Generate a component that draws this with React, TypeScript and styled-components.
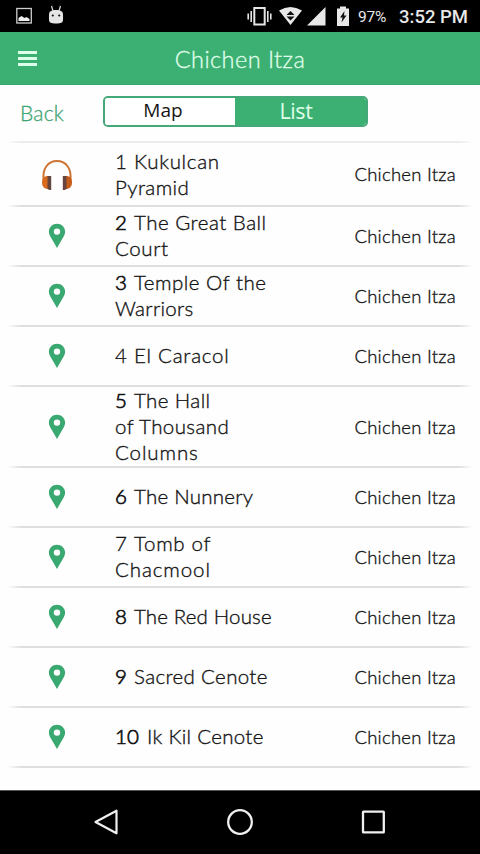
import React from 'react';
import styled, { createGlobalStyle } from 'styled-components';

const GREEN = '#3cb072';

const Global = createGlobalStyle`
  * { box-sizing: border-box; }
  html, body { margin: 0; padding: 0; background: #000; }
  body { overflow: hidden; }
`;

const Screen = styled.div`
  width: 480px;
  height: 854px;
  display: flex;
  flex-direction: column;
  background: #fefefe;
  font-family: Lato, "Liberation Sans", sans-serif;
  color: #141414;
`;

const StatusBar = styled.div`
  height: 32px;
  background: #000;
  display: flex;
  align-items: center;
  justify-content: space-between;
  padding: 0 11px 0 15px;
  font-family: Roboto, sans-serif;
  color: #e8e8e8;
`;

const StatusGroup = styled.div`
  display: flex;
  align-items: center;
  height: 32px;
`;

const Battery = styled.span`
  font-size: 15.5px;
  width: 29px;
  margin: 2px 12px 0 7px;
  letter-spacing: -0.2px;
`;

const Clock = styled.span`
  font-size: 18.5px;
  font-weight: 500;
  width: 70px;
  white-space: nowrap;
  margin-top: 2px;
`;

const Header = styled.header`
  height: 53px;
  background: ${GREEN};
  display: grid;
  grid-template-columns: 56px 1fr 56px;
  align-items: center;
  border-bottom: 1px solid #38a469;
`;

const Title = styled.h1`
  margin: 2px 0 0;
  text-align: center;
  font-size: 23.5px;
  line-height: 30px;
  font-weight: 300;
  letter-spacing: 0.45px;
  -webkit-text-stroke: 0.3px;
  color: #e0ffec;
`;

const MenuButton = styled.div`
  display: flex;
  flex-direction: column;
  gap: 3px;
  padding-left: 18px;
`;

const MenuLine = styled.span`
  width: 19px;
  height: 3px;
  background: #dcffe9;
`;

const Toolbar = styled.div`
  height: 56px;
  display: flex;
  align-items: flex-start;
  padding: 11px 0 0 20px;
`;

const Back = styled.span`
  width: 83px;
  padding-top: 4px;
  font-size: 21px;
  line-height: 26px;
  font-weight: 300;
  letter-spacing: 0.2px;
  -webkit-text-stroke: 0.3px;
  color: #3fa474;
`;

const Segmented = styled.div`
  width: 265px;
  height: 31px;
  display: flex;
  border: 2px solid #45a878;
  border-radius: 5px;
  overflow: hidden;
`;

const Segment = styled.div<{ $active?: boolean }>`
  width: ${p => (p.$active ? 131 : 130)}px;
  padding-right: ${p => (p.$active ? 9 : 14)}px;
  height: 27px;
  text-align: center;
  font-family: "Open Sans", sans-serif;
  font-size: ${p => (p.$active ? 21.5 : 19)}px;
  letter-spacing: ${p => (p.$active ? -0.4 : 0)}px;
  line-height: 25px;
  background: ${p => (p.$active ? GREEN : '#fff')};
  color: ${p => (p.$active ? '#ddffe9' : '#161616')};
`;

const fade = (tone: string) =>
  `linear-gradient(90deg, transparent, ${tone} 14px, ${tone} calc(100% - 14px), transparent)`;

const List = styled.div`
  flex: 1;
  margin: 0 7px;
  background: ${fade('#ececec')} top / 100% 2px no-repeat;
`;

const Row = styled.div<{ $height: number }>`
  height: ${p => p.$height}px;
  display: grid;
  grid-template-columns: 108px 1fr 110px;
  align-items: center;
  padding-bottom: 2px;
  background: ${fade('#dfdfdf')} bottom / 100% 2px no-repeat;

  &:first-child {
    padding: 1px 0 0;
  }
`;

const IconCell = styled.div`
  display: flex;
  justify-content: center;
  padding-right: 8px;
`;

const Name = styled.div`
  display: flex;
  flex-direction: column;
  padding-bottom: 2px;
`;

const Line = styled.span<{ $spacing: number }>`
  font-size: 20.5px;
  line-height: 26px;
  font-weight: 300;
  white-space: nowrap;
  letter-spacing: ${p => p.$spacing}px;
  -webkit-text-stroke: 0.35px;
`;

const Num = styled.span<{ $wide: boolean; $thin: boolean }>`
  display: inline-block;
  width: ${p => (p.$wide ? 32 : 19)}px;
  -webkit-text-stroke: ${p => (p.$thin ? 0.3 : 0.7)}px;
  letter-spacing: 0;
`;

const Place = styled.div`
  margin-left: -19px;
  padding: 0 17px 1px 0;
  text-align: right;
  font-size: 18.5px;
  line-height: 24px;
  font-weight: 300;
  white-space: nowrap;
  letter-spacing: 0.25px;
  -webkit-text-stroke: 0.35px;
`;

const NavBar = styled.nav`
  height: 64px;
  background: #000;
  border-top: 1px solid #555;
  display: flex;
  justify-content: space-between;
  align-items: center;
  padding: 0 93px 2px;
`;

const Pin = () => (
  <svg width="18" height="26" viewBox="0 0 18 26">
    <path fillRule="evenodd" fill="#3aa871" d="M9 .8C4.500.8.900 4.200.900 8.700c0 2 .8 3.800 1.900 5.500L9 25l6.200-10.800c1.100-1.700 1.900-3.500 1.900-5.500C17.100 4.200 13.500.8 9 .8zM9 5.400a3.200 3.200 0 1 1 0 6.400 3.200 3.200 0 0 1 0-6.400z" />
  </svg>
);

const Headphones = () => (
  <svg width="32" height="32" viewBox="0 0 32 32">
    <path d="M2.600 21C1.200 9.500 7 2.100 16 2.100S30.800 9.500 29.400 21" fill="none" stroke="#cc7636" strokeWidth="2" />
    <path d="M7 17C3 17 1 19 1 23.500S4 30 7 30z" fill="#d9691d" />
    <path d="M25 17c4 0 6 2 6 6.500S28 30 25 30z" fill="#c65c1a" />
    <path d="M6.500 17h3.700v14H8.500l-2-1z M25.500 17h-3.700v14h1.700l2-1z" fill="#65453d" />
  </svg>
);

const LeftStatus = () => (
  <svg width="52" height="24" viewBox="0 0 52 24">
    <rect x="1.800" y="4.500" width="14.500" height="14.500" fill="none" stroke="#ccc" strokeWidth="1.300" />
    <path d="M3.500 17v-3l3-2 3 2 2-1 3 2v2z" fill="#eee" />
    <path d="M34 10.500c0-3 2-4.500 7-4.500s7 1.500 7 4.500V16c0 2.500-2 3.500-7 3.500S34 18.500 34 16z" fill="#e5e5e5" />
    <path d="M38 7l-1.500-5M44 7l1.500-5" stroke="#ddd" strokeWidth="1.200" />
    <circle cx="37.800" cy="11.500" r="1.100" fill="#111" />
    <circle cx="44.200" cy="11.500" r="1.100" fill="#111" />
  </svg>
);

const RightStatus = () => (
  <svg width="104" height="24" viewBox="0 0 104 24">
    <g fill="none" stroke="#e5e5e5">
      <rect x="7.300" y="4" width="10.400" height="16.500" strokeWidth="2" />
      <path d="M4.200 7v11M20.800 7v11M1.200 9.500v6M23.800 9.500v6" strokeWidth="1.600" />
    </g>
    <path d="M32 6.500Q43.500-.5 55 6.500L43.500 21z" fill="#e8e8e8" />
    <path d="M43.500 7l4 4h-8zM39.500 12.500h8l-4 4z" fill="#111" />
    <path d="M60 21.500h18.500V3z" fill="#e8e8e8" />
    <path d="M90 4.500h3v-2h6v2h3v17.500H90z" fill="#e8e8e8" />
    <path d="M97.500 7l-4.500 6.500h2.500L94.500 18.500l5-7H97z" fill="#111" />
  </svg>
);

const NavBack = () => (
  <svg width="28" height="30" viewBox="0 0 28 30">
    <path d="M2.500 15L23.500 3.700v22.600z" fill="none" stroke="#f0f0f0" strokeWidth="2.200" strokeLinejoin="round" />
  </svg>
);
const NavHome = () => (
  <svg width="28" height="30" viewBox="0 0 28 30">
    <circle cx="14" cy="15" r="11.800" fill="none" stroke="#f0f0f0" strokeWidth="2.300" />
  </svg>
);
const NavRecent = () => (
  <svg width="28" height="30" viewBox="0 0 28 30">
    <rect x="4" y="4.600" width="20.800" height="20.800" rx=".5" fill="none" stroke="#f0f0f0" strokeWidth="2.300" />
  </svg>
);

type Site = { n: number; height: number; lines: [string, number][]; audio?: boolean };

const THIN_DIGITS = [1, 4, 7];

const sites: Site[] = [
  { n: 1, height: 66, audio: true, lines: [['Kukulcan', 0.7], ['Pyramid', 0.4]] },
  { n: 2, height: 60, lines: [['The Great Ball', 0.5], ['Court', 0.6]] },
  { n: 3, height: 60, lines: [['Temple Of the', 0.5], ['Warriors', 0.3]] },
  { n: 4, height: 60, lines: [['El Caracol', 0.75]] },
  { n: 5, height: 81, lines: [['The Hall', 0.4], ['of Thousand', 0.4], ['Columns', 0.9]] },
  { n: 6, height: 60, lines: [['The Nunnery', 0.25]] },
  { n: 7, height: 60, lines: [['Tomb of', 0.7], ['Chacmool', 0.9]] },
  { n: 8, height: 60, lines: [['The Red House', 0.15]] },
  { n: 9, height: 60, lines: [['Sacred Cenote', 0.35]] },
  { n: 10, height: 60, lines: [['Ik Kil Cenote', 0.3]] },
];

export default function App() {
  return (
    <>
      <Global />
      <Screen>
        <StatusBar>
          <StatusGroup><LeftStatus /></StatusGroup>
          <StatusGroup>
            <RightStatus />
            <Battery>97%</Battery>
            <Clock>3:52 PM</Clock>
          </StatusGroup>
        </StatusBar>
        <Header>
          <MenuButton><MenuLine /><MenuLine /><MenuLine /></MenuButton>
          <Title>Chichen Itza</Title>
        </Header>
        <Toolbar>
          <Back>Back</Back>
          <Segmented>
            <Segment>Map</Segment>
            <Segment $active>List</Segment>
          </Segmented>
        </Toolbar>
        <List>
          {sites.map(site => (
            <Row key={site.n} $height={site.height}>
              <IconCell>{site.audio ? <Headphones /> : <Pin />}</IconCell>
              <Name>
                {site.lines.map(([text, spacing], i) => (
                  <Line key={text} $spacing={spacing}>
                    {i === 0 && (
                      <Num $wide={site.n > 9} $thin={THIN_DIGITS.includes(site.n)}>{site.n}</Num>
                    )}
                    {text}
                  </Line>
                ))}
              </Name>
              <Place>Chichen Itza</Place>
            </Row>
          ))}
        </List>
        <NavBar><NavBack /><NavHome /><NavRecent /></NavBar>
      </Screen>
    </>
  );
}
